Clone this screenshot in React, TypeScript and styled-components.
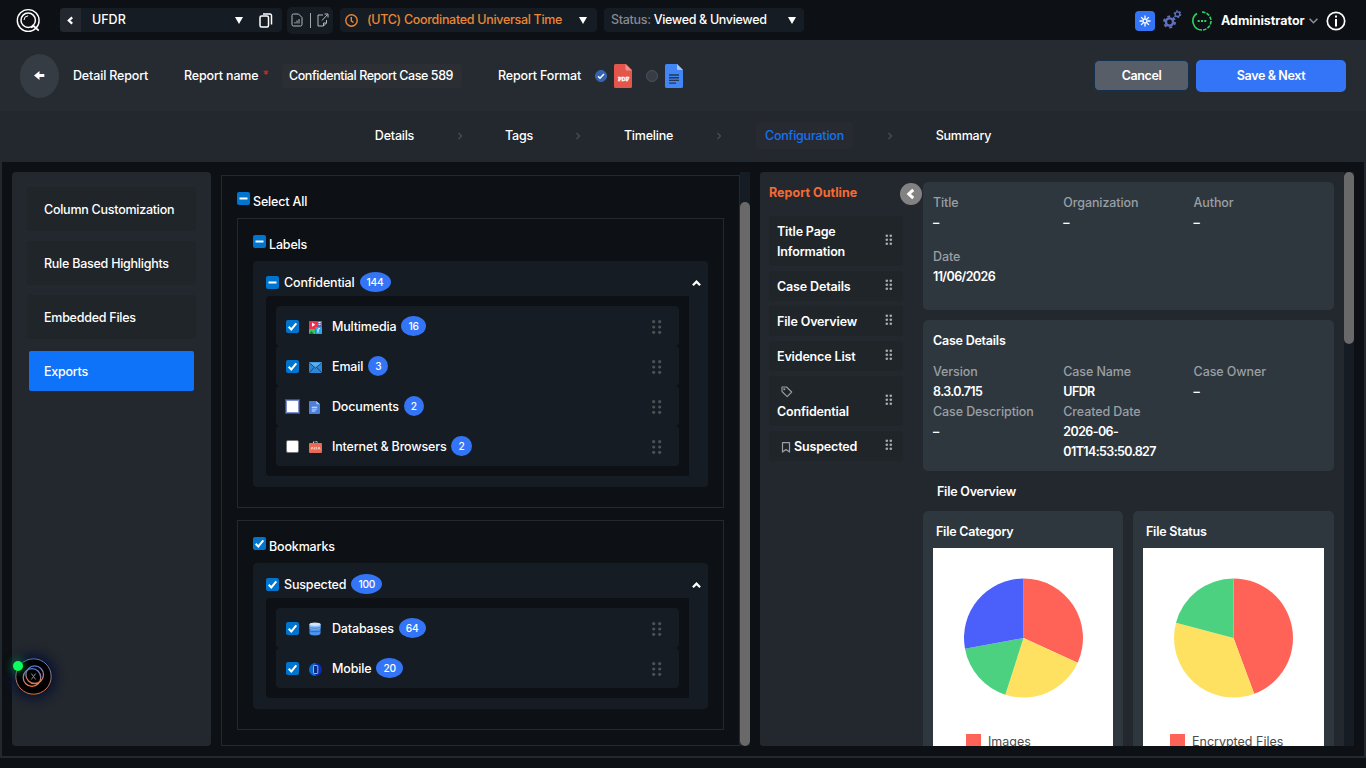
import React, { useState } from "react";
import styled, { createGlobalStyle, ThemeProvider } from "styled-components";

const theme = {
  colors: {
    base: "#0d1014",
    card: "#161c23",
    panel: "#23272e",
    item: "#20252a",
    bar: "#262b32",
    block: "#2f373e",
    primary: "#3375f6",
    check: "#0075d0",
    line: "#25292d",
    muted: "#9a9fa4",
    thumb: "#696969",
  },
};

const GlobalStyle = createGlobalStyle`
  * {
    box-sizing: border-box;
  }

  body {
    margin: 0;
    width: 1366px;
    height: 768px;
    overflow: hidden;
    background: ${theme.colors.base};
    color: #fff;
    font-family: Inter, "Open Sans", sans-serif;
    font-size: 12.5px;
    font-weight: 500;
    line-height: 20px;
    letter-spacing: -0.16px;
    white-space: nowrap;
  }

  svg {
    display: block;
    flex: none;
  }
`;

const Page = styled.div`
  height: 768px;
  display: flex;
  flex-direction: column;
  position: relative;
`;

/* ---------- top bar ---------- */

const TopBar = styled.header`
  height: 40px;
  flex: none;
  display: flex;
  align-items: center;
  padding: 0 20px 0 16px;
`;

const Picker = styled.div<{ $width: number; $left: number }>`
  width: ${({ $width }) => $width}px;
  height: 24px;
  margin-left: ${({ $left }) => $left}px;
  display: flex;
  align-items: center;
  background: ${({ theme }) => theme.colors.card};
  border-radius: 4px;
  overflow: hidden;

  > svg:last-child {
    margin-right: 9px;
  }
`;

const PickerBack = styled.button`
  width: 21px;
  height: 24px;
  padding: 0;
  border: 0;
  background: #22282e;
  display: grid;
  place-items: center;
`;

const PickerText = styled.span<{ $tone?: string; $left: number; $spacing?: number }>`
  margin-left: ${({ $left }) => $left}px;
  color: ${({ $tone }) => $tone || "#fff"};
  letter-spacing: ${({ $spacing }) => $spacing || 0}px;
`;

const Caret = styled.i<{ $right: number }>`
  margin-left: auto;
  margin-right: ${({ $right }) => $right}px;
  border: 4.5px solid transparent;
  border-top: 7px solid #fff;
  border-bottom: 0;
`;

const IconGroup = styled.div`
  width: 46px;
  height: 27px;
  margin-left: 5px;
  padding: 0 4px;
  display: flex;
  align-items: center;
  justify-content: space-between;
  background: ${({ theme }) => theme.colors.card};
  border-radius: 5px;

  i {
    width: 1px;
    height: 15px;
    background: #a3a7ab;
  }
`;

const TopRight = styled.div`
  margin-left: auto;
  display: flex;
  align-items: center;
`;

const BlueSquare = styled.div`
  width: 20px;
  height: 20px;
  margin: 2px 8px 0 0;
  border-radius: 4px;
  background: ${({ theme }) => theme.colors.primary};
  display: grid;
  place-items: center;
`;

const StatusSlot = styled.span`
  margin: 2px 0 0 10px;
`;

const UserName = styled.span`
  width: 88px;
  margin-left: 9px;
  padding-top: 1px;
  font-weight: 700;
  letter-spacing: -0.02px;
`;

const InfoSlot = styled.span`
  margin: 2px 0 0 8px;
`;

/* ---------- report bar ---------- */

const ReportBar = styled.section`
  height: 71px;
  flex: none;
  display: flex;
  align-items: center;
  padding: 0 20px;
  background: ${({ theme }) => theme.colors.bar};
`;

const BackButton = styled.button`
  width: 39px;
  height: 44px;
  padding: 0;
  border: 0;
  border-radius: 50%;
  background: #363c43;
  display: grid;
  place-items: center;
`;

const BarLabel = styled.span<{ $width: number; $left: number }>`
  width: ${({ $width }) => $width}px;
  margin-left: ${({ $left }) => $left}px;
  padding-top: 1px;

  sup {
    color: #d9222a;
    font-size: 12px;
    line-height: 0;
    margin-left: 4px;
    vertical-align: 1px;
  }
`;

const NameField = styled.div`
  width: 180px;
  height: 24px;
  padding-left: 7px;
  line-height: 23px;
  border-radius: 3px;
  background: #2b2f34;
  letter-spacing: -0.43px;
`;

const Radio = styled.span<{ $on?: boolean }>`
  width: 12px;
  height: 12px;
  border-radius: 50%;
  border: 1px solid ${({ $on }) => ($on ? "#3a69b5" : "#4a525c")};
  background: ${({ $on }) => ($on ? "#3262b0" : "#363d45")};
  display: grid;
  place-items: center;
`;

const Formats = styled.div`
  display: flex;
  align-items: center;
  gap: 7px;

  ${Radio}:nth-of-type(2) {
    margin-left: 7px;
  }
`;

const Actions = styled.div`
  margin-left: auto;
  display: flex;
  align-items: center;
  gap: 7px;
`;

const Button = styled.button<{ $main?: boolean }>`
  width: ${({ $main }) => ($main ? 150 : 95)}px;
  height: ${({ $main }) => ($main ? 32 : 31)}px;
  padding: 1px 0 0;
  border: ${({ $main }) => ($main ? "0" : "1px solid #14304f")};
  border-radius: 5px;
  background: ${({ $main, theme }) => ($main ? theme.colors.primary : "#575e68")};
  color: #fff;
  font: inherit;
  font-weight: 600;
  letter-spacing: -0.38px;
`;

/* ---------- steps ---------- */

const Steps = styled.nav`
  height: 51px;
  flex: none;
  padding-left: 366px;
  display: flex;
  align-items: center;
  background: ${({ theme }) => theme.colors.panel};
`;

const Step = styled.span<{ $width: number; $active?: boolean }>`
  width: ${({ $width }) => $width}px;
  height: 27px;
  margin-top: -3px;
  line-height: 27px;
  border-radius: 4px;
  text-align: center;
  letter-spacing: -0.22px;
  color: ${({ $active }) => ($active ? "#1473f0" : "#fff")};
  background: ${({ $active }) => ($active ? "#272b31" : "transparent")};
`;

const StepArrow = styled.span`
  width: 74px;
  margin-top: -2px;
  display: grid;
  place-items: center;
`;

/* ---------- body ---------- */

const Body = styled.main`
  height: 596px;
  flex: none;
  display: flex;
  padding: 10px;
  border: 2px solid ${({ theme }) => theme.colors.panel};
  border-top: 0;
`;

const SideNav = styled.aside`
  width: 199px;
  flex: none;
  padding: 15px;
  display: flex;
  flex-direction: column;
  gap: 10px;
  border-radius: 4px;
  background: ${({ theme }) => theme.colors.panel};
`;

const SideItem = styled.div<{ $active?: boolean }>`
  height: 44px;
  padding-left: 15px;
  line-height: 41px;
  letter-spacing: -0.25px;
  border: 2px solid ${({ $active, theme }) => ($active ? theme.colors.panel : theme.colors.item)};
  border-radius: 4px;
  background: ${({ $active, theme }) => ($active ? "#0f73fa" : theme.colors.item)};
`;

const ExportPane = styled.section`
  width: 529px;
  margin-left: 10px;
  flex: none;
  display: flex;
`;

const ExportFrame = styled.div`
  flex: 1;
  margin-top: 3px;
  padding: 15px 15px 0;
  border: 1px solid ${({ theme }) => theme.colors.line};
`;

const Track = styled.div<{ $top?: number; $height: number }>`
  width: 10px;
  flex: none;
  padding-top: ${({ $top }) => $top || 0}px;
  background: ${({ theme }) => theme.colors.card};

  &::before {
    content: "";
    display: block;
    height: ${({ $height }) => $height}px;
    border-radius: 5px;
    background: ${({ theme }) => theme.colors.thumb};
  }
`;

const CheckLine = styled.label<{ $gap?: number }>`
  display: flex;
  gap: 3px;
  height: 20px;
  padding-top: 1px;
  margin-bottom: ${({ $gap }) => $gap || 0}px;
  line-height: 19px;
`;

const Box = styled.span<{ $state: string; $focus?: boolean }>`
  width: 13px;
  height: 13px;
  flex: none;
  border-radius: ${({ $focus }) => ($focus ? 0 : 2)}px;
  display: grid;
  place-items: center;
  border: ${({ $state, $focus }) =>
    $state === "off" ? `1px solid ${$focus ? "#7d8fce" : "#767676"}` : "0"};
  background: ${({ $state, theme }) => ($state === "off" ? "#fff" : theme.colors.check)};
  outline: ${({ $focus }) => ($focus ? "1px solid #2a4cae" : "none")};
`;

const Group = styled.div<{ $height: number }>`
  height: ${({ $height }) => $height}px;
  margin-bottom: 12px;
  padding: 15px 15px 0;
  border: 1px solid ${({ theme }) => theme.colors.line};
`;

const Card = styled.div`
  margin-top: 7px;
  padding: 11px 19px 11px 13px;
  border-radius: 4px;
  background: ${({ theme }) => theme.colors.card};
`;

const Name = styled.span`
  padding-top: 1px;
`;

const CardHead = styled.div`
  height: 20px;
  margin: 0 -12px 4px 0;
  display: flex;
  align-items: center;

  > ${Box} {
    margin: 1px 5px 0 0;
  }

  > svg {
    margin: 3px 0 0 auto;
  }
`;

const Badge = styled.b`
  height: 20px;
  margin-left: 5px;
  padding: 0 7px;
  min-width: 20px;
  border-radius: 50%;
  background: ${({ theme }) => theme.colors.primary};
  font-size: 10.2px;
  font-weight: 500;
  line-height: 20px;
  text-align: center;
`;

const Rows = styled.div`
  padding: 10px;
  border-radius: 4px 0 0 4px;
  background: ${({ theme }) => theme.colors.base};
`;

const Handle = styled.span<{ $small?: boolean }>`
  margin-left: auto;
  margin-top: ${({ $small }) => ($small ? -4 : 1)}px;
  color: ${({ $small }) => ($small ? "#a9acaf" : "#4c5155")};
`;

const Row = styled.div`
  height: 40px;
  padding: 0 17px 0 10px;
  display: flex;
  align-items: center;
  border-radius: 4px;
  background: ${({ theme }) => theme.colors.card};

  > ${Box} {
    margin-top: 1px;
  }
`;

const RowIcon = styled.span`
  width: 14px;
  margin: 2px 9px 0 10px;
`;

/* ---------- preview ---------- */

const Preview = styled.section`
  width: 584px;
  margin-left: 10px;
  flex: none;
  display: flex;
  position: relative;
  border-radius: 3px 0 0 3px;
  background: ${({ theme }) => theme.colors.panel};
  overflow: hidden;
`;

const Outline = styled.div`
  width: 134px;
  margin: 10px 20px 0 9px;
  flex: none;
  display: flex;
  flex-direction: column;
  gap: 5px;

  h3 {
    height: 20px;
    margin: 0 0 9px;
    color: #f56a35;
    font-size: 12.5px;
    font-weight: 700;
    letter-spacing: 0.02px;
    padding-top: 1px;
    line-height: 19px;
  }
`;

const OutlineItem = styled.div`
  padding: 6px 10px 4px 8px;
  display: flex;
  align-items: center;
  border-radius: 3px;
  background: ${({ theme }) => theme.colors.item};
  font-weight: 600;
  letter-spacing: -0.15px;
  white-space: normal;

  > span:first-child {
    width: 90px;
  }

  span > svg {
    display: inline-block;
    vertical-align: -2px;
    margin: 0 0 0 4px;
  }

  ${Handle} svg {
    display: block;
    margin: 0;
  }
`;

const Collapse = styled.button`
  position: absolute;
  left: 140px;
  top: 11px;
  width: 22px;
  height: 22px;
  padding: 0 1px 0 0;
  border: 0;
  border-radius: 50%;
  background: #828282;
  display: grid;
  place-items: center;
`;

const Sheets = styled.div`
  width: 411px;
  padding-top: 10px;
`;

const Block = styled.div<{ $height: number }>`
  height: ${({ $height }) => $height}px;
  margin-bottom: 10px;
  padding: 11px 10px 9px;
  border-radius: 5px;
  background: ${({ theme }) => theme.colors.block};
`;

const Heading = styled.h4<{ $pad?: number; $down?: boolean }>`
  height: 20px;
  margin: 0;
  padding-top: ${({ $down }) => ($down ? 1 : 0)}px;
  padding-left: ${({ $pad }) => $pad || 0}px;
  font-size: 12.5px;
  font-weight: 600;
  letter-spacing: -0.23px;
`;

const Fields = styled.dl<{ $gap: number; $top?: number }>`
  margin: ${({ $top }) => $top || 0}px 0 0;
  display: grid;
  grid-template-columns: 130.3px 130.3px 130px;
  row-gap: ${({ $gap }) => $gap}px;

  dt {
    color: ${({ theme }) => theme.colors.muted};
    letter-spacing: -0.1px;
  }

  dd {
    margin: 0;
    font-weight: 600;
    letter-spacing: -0.6px;
    white-space: normal;
  }
`;

const Charts = styled.div`
  margin-top: 10px;
  display: grid;
  grid-template-columns: 200px 201px;
  gap: 10px;
`;

const ChartCard = styled.div`
  height: 260px;
  padding: 10px;
  border-radius: 5px;
  background: ${({ theme }) => theme.colors.block};
`;

const ChartPaper = styled.div`
  height: 240px;
  margin-top: 7px;
  padding-top: 30px;
  background: #fff;

  > svg {
    margin-left: 30px;
  }
`;

const Legend = styled.div<{ $left: number }>`
  margin: 34px 0 0 ${({ $left }) => $left}px;
  display: flex;
  align-items: center;
  gap: 7px;
  color: #4a4a4a;
  font-weight: 400;
  letter-spacing: 0;

  i {
    width: 15px;
    height: 15px;
    margin-top: -2px;
    background: #ff6358;
  }
`;

const Assistant = styled.div`
  position: absolute;
  left: 15px;
  top: 658px;
  width: 37px;
  height: 37px;
  border-radius: 50%;
  background: #000;
  box-shadow: 0 0 10px 5px #0c1630;

  &::after {
    content: "";
    position: absolute;
    left: -2px;
    top: 3px;
    width: 10px;
    height: 10px;
    border-radius: 50%;
    background: #0cff5c;
    box-shadow: 0 0 9px 1px #0a7a32;
  }
`;

/* ---------- drawings ---------- */

const Logo = () => (
  <svg width="25" height="25" viewBox="0 0 25 25" fill="none" stroke="#fff">
    <circle cx="12.2" cy="12.5" r="10.9" strokeWidth="1.4" />
    <circle cx="12.2" cy="12.2" r="7.2" strokeWidth="1.5" />
    <path d="M8 12a4.4 4.4 0 0 1 4.2-4.2" strokeWidth="1" />
    <path d="M16.5 17l6.3 5.7M15 19.5l3-1.5" strokeWidth="1.7" />
  </svg>
);

const Chevron = ({ dir = "left", size = 8, color = "#fff", width = 2 }) => {
  const paths: Record<string, string> = {
    left: "M5.5 1.2L2.5 4l3 2.8",
    right: "M2.5 1l3 3-3 3",
    up: "M.8 5.6L4 2.4l3.2 3.2",
    down: "M.5 2.5L4 6l3.5-3.5",
  };
  return (
    <svg width={size} height={size} viewBox="0 0 8 8" fill="none" stroke={color} strokeWidth={width}>
      <path d={paths[dir]} />
    </svg>
  );
};

const CopyIcon = () => (
  <svg width="14" height="15" viewBox="0 0 14 15" fill="none" stroke="#fff" strokeWidth="1.5">
    <rect x="1" y="3" width="8.5" height="11" rx="1.5" />
    <path d="M4 1h7a1.5 1.5 0 0 1 1.5 1.5v9" />
  </svg>
);

const ReportIcon = () => (
  <svg width="12" height="14" viewBox="0 0 12 14" fill="none" stroke="#b5b8bb">
    <path d="M1 2.5A1.5 1.5 0 0 1 2.5 1H7.5L11 4.5v7A1.5 1.5 0 0 1 9.5 13h-7A1.5 1.5 0 0 1 1 11.5z" />
    <path d="M4 10.5v-1.5M6 10.5v-3M8 10.5v-4.5" />
  </svg>
);

const ShareIcon = () => (
  <svg width="12" height="14" viewBox="0 0 12 14" fill="none" stroke="#b5b8bb">
    <path d="M6 2H1v11h5.500L9.500 10V7M6.500 13v-3h3" />
    <path d="M5 7.500L10.500 1.500M7.500 1H11v3.500" />
  </svg>
);

const ClockIcon = () => (
  <svg width="13" height="13" viewBox="0 0 13 13" fill="none" stroke="#ec8733" strokeWidth="1.4">
    <circle cx="6.5" cy="6.5" r="5.7" />
    <path d="M6.3 3v3.8l2.2 1.7" />
  </svg>
);

const SparkIcon = () => (
  <svg width="12" height="12" viewBox="0 0 12 12" stroke="#fff" strokeWidth="1.3" fill="none">
    <path d="M6 .5v3M6 8.500v3M.5 6h3M8.500 6h3M2.100 2.100l2 2M7.900 7.900l2 2M2.100 9.900l2-2M7.900 4.100l2-2" />
    <circle cx="6" cy="6" r="2" />
  </svg>
);

const GearsIcon = () => (
  <svg width="19" height="20" viewBox="0 0 19 20" fill="none" stroke="#6170bd">
    <circle cx="6.5" cy="12" r="3.6" strokeWidth="2.4" />
    <circle cx="6.5" cy="12" r="5.5" strokeWidth="2" strokeDasharray="2.9 2.86" />
    <circle cx="14.5" cy="4.2" r="2.3" strokeWidth="1.3" />
    <circle cx="14.5" cy="4.2" r="3.3" strokeWidth="1.2" strokeDasharray="1.7 1.75" />
  </svg>
);

const StatusIcon = () => (
  <svg width="20" height="20" viewBox="0 0 20 20" fill="none" stroke="#2fd45f">
    <path d="M10 1a9 9 0 0 1 0 18" strokeWidth="1.6" strokeDasharray="3.5 1.2" />
    <path d="M10 19A9 9 0 0 1 5 2.5" strokeWidth="1.6" />
    <path d="M5.700 10h2M9 10h2M12.300 10h2" strokeWidth="2" />
  </svg>
);

const InfoIcon = () => (
  <svg width="20" height="20" viewBox="0 0 20 20" fill="none" stroke="#fff">
    <circle cx="10" cy="10" r="8.7" strokeWidth="1.7" />
    <path d="M10 8v7.500M10 4.500v2" strokeWidth="2" />
  </svg>
);

const ArrowLeft = () => (
  <svg width="11" height="9" viewBox="0 0 11 9" fill="#fff">
    <path d="M0 4.500L5.500 0v3h4.800v3H5.500v3z" />
  </svg>
);

const PdfIcon = () => (
  <svg width="18" height="24" viewBox="0 0 18 24">
    <path d="M1.500 0H12l6 6v16.500a1.500 1.500 0 0 1-1.500 1.500h-15A1.500 1.500 0 0 1 0 22.500v-21A1.500 1.500 0 0 1 1.500 0z" fill="#e2564b" />
    <path d="M11.500 0L18 6.500h-5a1.500 1.500 0 0 1-1.500-1.500z" fill="#ef8f86" />
    <text
      x="9.6"
      y="17.2"
      textAnchor="middle"
      fontSize="5.8"
      fontWeight="900"
      letterSpacing="0"
      fill="#fff"
      stroke="#fff"
      strokeWidth=".3"
      fontFamily="Liberation Serif, serif"
    >
      PDF
    </text>
  </svg>
);

const DocIcon = ({ small = false }) => (
  <svg width={small ? 11 : 18} height={small ? 13 : 24} viewBox="0 0 18 24" preserveAspectRatio="none">
    <path
      d="M1.500 0H12l6 6v16.500a1.500 1.500 0 0 1-1.500 1.500h-15A1.500 1.500 0 0 1 0 22.500v-21A1.500 1.500 0 0 1 1.500 0z"
      fill={small ? "#4b7fdc" : "#4285f4"}
    />
    <path d="M12 0l6 6h-5a1 1 0 0 1-1-1z" fill="#a5c5f8" />
    <path
      d={small ? "M4.500 11.500h9M4.500 15h9M4.500 18.500h6" : "M4 11h10M4 13.700h10M4 16.400h10M4 19.100h7"}
      stroke={small ? "#e4ecfb" : "#26384f"}
      strokeWidth={small ? 1.8 : 1.4}
    />
  </svg>
);

const MediaIcon = () => (
  <svg width="13" height="13" viewBox="0 0 13 13">
    <rect width="8" height="8" fill="#f0304c" />
    <path d="M3 1.500v4.300L6.300 3.700z" fill="#fff" />
    <rect x="8" width="5" height="6" fill="#5c69b8" />
    <path d="M9.500 1.500h2M9.500 3.300h2" stroke="#fff" />
    <rect y="8" width="6.5" height="5" fill="#36c759" />
    <path d="M0 13l2.500-3L5 13z" fill="#137a3b" />
    <rect x="6.5" y="6" width="6.5" height="7" fill="#2aa6f2" />
    <path d="M9 11.500V8l2-.5" stroke="#fff" fill="none" />
  </svg>
);

const MailIcon = () => (
  <svg width="13" height="11" viewBox="0 0 13 11">
    <rect width="13" height="11" rx="1" fill="#2f86d3" />
    <path d="M0 .5h13L6.500 6z" fill="#58b0ee" />
    <path d="M.5 1l6 5 6-5M.5 10.500l4.500-5M12.500 10.500L8 5.500" stroke="#143f6b" fill="none" strokeWidth=".9" />
  </svg>
);

const WebIcon = () => (
  <svg width="13" height="12" viewBox="0 0 13 12">
    <path d="M4.500 2V.8h4V2" stroke="#d6dbe0" fill="none" strokeDasharray="2 1" />
    <rect y="2" width="13" height="10" rx="1" fill="#ea6a58" />
    <path d="M2 8.500l1.200-2.500 1.200 2.500M5.700 6v2.500M7.300 6v2.500M9 8.500L10 6l1.200 2.500" stroke="#fbd9d4" fill="none" strokeWidth=".9" />
  </svg>
);

const DatabaseIcon = () => (
  <svg width="12" height="14" viewBox="0 0 12 14">
    <path d="M.5 2v9.500c0 1.200 2.500 2 5.500 2s5.500-.8 5.500-2V2z" fill="#4a93ef" />
    <path d="M.5 2v4c0 1 2.500 1.600 5.500 1.600S11.500 7 11.500 6V2z" fill="#8cbdf6" />
    <ellipse cx="6" cy="2.2" rx="5.5" ry="1.7" fill="#cfe3fc" />
    <path d="M.5 5.200c1 1.300 10 1.300 11 0M.5 8.700c1 1.300 10 1.300 11 0" stroke="#2566b8" fill="none" strokeWidth=".8" />
  </svg>
);

const MobileIcon = () => (
  <svg width="13" height="13" viewBox="0 0 13 13">
    <circle cx="6.5" cy="6.5" r="6.5" fill="#0c2bb0" />
    <path d="M6.500 0a6.500 6.500 0 0 0 0 13z" fill="#0868cf" />
    <rect x="4.5" y="2.5" width="4.3" height="8" rx=".7" fill="#0b2a7c" stroke="#9cc4fa" strokeWidth=".9" />
  </svg>
);

const Dots = ({ small = false }) => (
  <svg width={small ? 8 : 10} height={small ? 12 : 14} fill="currentColor">
    {[0, 1, 2].map((row) =>
      [0, 1].map((col) => (
        <circle
          key={`${row}-${col}`}
          cx={small ? 1.8 + col * 4 : 1.7 + col * 6}
          cy={small ? 1.8 + row * 4 : 1.7 + row * 5.3}
          r={small ? 1.3 : 1.6}
        />
      ))
    )}
  </svg>
);

const TagIcon = () => (
  <svg width="12" height="12" viewBox="0 0 12 12" fill="none" stroke="#999ea6" strokeWidth="1.1">
    <path d="M1 1h4.500L10.700 6 6.200 10.700 1 5.500z" strokeLinejoin="round" />
    <circle cx="3.3" cy="3.3" r=".5" />
  </svg>
);

const BookmarkIcon = () => (
  <svg width="10" height="11" viewBox="0 0 10 11" fill="none" stroke="#999ea6" strokeWidth="1.2">
    <path d="M1.500.7h7v9.400L5 7.500l-3.500 2.600z" strokeLinejoin="round" />
  </svg>
);

const AssistantIcon = () => (
  <svg width="37" height="37" viewBox="0 0 37 37" fill="none">
    <defs>
      <linearGradient id="ring" x1="0" y1="0" x2="0" y2="1">
        <stop offset="0" stopColor="#5e7fe0" />
        <stop offset=".55" stopColor="#a8808c" />
        <stop offset="1" stopColor="#f07840" />
      </linearGradient>
    </defs>
    <circle cx="18.5" cy="18.5" r="17.7" stroke="url(#ring)" />
    <circle cx="17" cy="19.5" r="8.8" stroke="url(#ring)" strokeWidth="1.3" />
    <circle cx="19.7" cy="16.7" r="8.8" stroke="url(#ring)" strokeWidth="1.3" />
    <path d="M16.300 15.500l4.400 6M20.700 15.500l-4.400 6" stroke="#8f96a6" strokeWidth=".9" />
  </svg>
);

/* ---------- widgets ---------- */

type CheckState = "on" | "off" | "mixed";

const Checkbox: React.FC<{ state: CheckState; focus?: boolean }> = ({ state, focus }) => (
  <Box $state={state} $focus={focus}>
    {state !== "off" && (
      <svg width="13" height="13" viewBox="0 0 13 13" fill="none" stroke="#fff" strokeWidth="2">
        <path d={state === "on" ? "M2.700 6.800l2.600 2.600 5-6" : "M2.500 6.500h8"} />
      </svg>
    )}
  </Box>
);

interface Slice {
  to: number;
  color: string;
}

const Pie: React.FC<{ slices: Slice[] }> = ({ slices }) => {
  const point = (deg: number) => {
    const a = (deg * Math.PI) / 180;
    return `${60.5 + 59.5 * Math.sin(a)} ${60 - 59.5 * Math.cos(a)}`;
  };
  return (
    <svg width="121" height="120" viewBox="0 0 121 120">
      {slices.map((slice, i) => {
        const from = i ? slices[i - 1].to : 0;
        return (
          <path
            key={slice.color}
            fill={slice.color}
            d={`M60.5 60L${point(from)}A59.5 59.5 0 ${slice.to - from > 180 ? 1 : 0} 1 ${point(slice.to)}Z`}
          />
        );
      })}
    </svg>
  );
};

interface ExportRow {
  name: string;
  count: number;
  state: CheckState;
  focus?: boolean;
  icon: React.ReactNode;
}

interface ExportGroupProps {
  title: string;
  state: CheckState;
  height: number;
  name: string;
  count: number;
  rows: ExportRow[];
}

const ExportGroup: React.FC<ExportGroupProps> = ({ title, state, height, name, count, rows }) => (
  <Group $height={height}>
    <CheckLine>
      <Checkbox state={state} />
      <span>{title}</span>
    </CheckLine>
    <Card>
      <CardHead>
        <Checkbox state={state} />
        <Name>{name}</Name>
        <Badge>{count}</Badge>
        <Chevron dir="up" size={9} />
      </CardHead>
      <Rows>
        {rows.map((row) => (
          <Row key={row.name}>
            <Checkbox state={row.state} focus={row.focus} />
            <RowIcon>{row.icon}</RowIcon>
            <Name>{row.name}</Name>
            <Badge>{row.count}</Badge>
            <Handle>
              <Dots />
            </Handle>
          </Row>
        ))}
      </Rows>
    </Card>
  </Group>
);

const steps = [
  { name: "Details", width: 57 },
  { name: "Tags", width: 44 },
  { name: "Timeline", width: 67 },
  { name: "Configuration", width: 97 },
  { name: "Summary", width: 73 },
];

const labelRows: ExportRow[] = [
  { name: "Multimedia", count: 16, state: "on", icon: <MediaIcon /> },
  { name: "Email", count: 3, state: "on", icon: <MailIcon /> },
  { name: "Documents", count: 2, state: "off", focus: true, icon: <DocIcon small /> },
  { name: "Internet & Browsers", count: 2, state: "off", icon: <WebIcon /> },
];

const bookmarkRows: ExportRow[] = [
  { name: "Databases", count: 64, state: "on", icon: <DatabaseIcon /> },
  { name: "Mobile", count: 20, state: "on", icon: <MobileIcon /> },
];

const outline = [
  { name: "Title Page Information" },
  { name: "Case Details" },
  { name: "File Overview" },
  { name: "Evidence List" },
  { name: "Confidential", icon: <TagIcon /> },
  { name: "Suspected", icon: <BookmarkIcon /> },
];

const Field = ({ label, value }: { label: string; value: string }) => (
  <div>
    <dt>{label}</dt>
    <dd>{value}</dd>
  </div>
);

const App: React.FC = () => {
  const [section, setSection] = useState("Exports");

  return (
    <ThemeProvider theme={theme}>
      <GlobalStyle />
      <Page>
        <TopBar>
          <Logo />
          <Picker $width={222} $left={19}>
            <PickerBack>
              <Chevron size={9} />
            </PickerBack>
            <PickerText $left={11}>UFDR</PickerText>
            <Caret $right={16} />
            <CopyIcon />
          </Picker>
          <IconGroup>
            <ReportIcon />
            <i />
            <ShareIcon />
          </IconGroup>
          <Picker $width={257} $left={7}>
            <PickerText $left={5}>
              <ClockIcon />
            </PickerText>
            <PickerText $left={9} $tone="#ec8733" $spacing={-0.3}>
              (UTC) Coordinated Universal Time
            </PickerText>
            <Caret $right={10} />
          </Picker>
          <Picker $width={200} $left={7}>
            <PickerText $left={7} $tone="#868b90" $spacing={-0.3}>
              Status:
            </PickerText>
            <PickerText $left={3} $spacing={-0.33}>
              Viewed &amp; Unviewed
            </PickerText>
            <Caret $right={8} />
          </Picker>
          <TopRight>
            <BlueSquare>
              <SparkIcon />
            </BlueSquare>
            <GearsIcon />
            <StatusSlot>
              <StatusIcon />
            </StatusSlot>
            <UserName>Administrator</UserName>
            <Chevron dir="down" color="#8d9196" width={1.4} size={9} />
            <InfoSlot>
              <InfoIcon />
            </InfoSlot>
          </TopRight>
        </TopBar>

        <ReportBar>
          <BackButton>
            <ArrowLeft />
          </BackButton>
          <BarLabel $left={14} $width={111}>
            Detail Report
          </BarLabel>
          <BarLabel $left={0} $width={98}>
            Report name<sup>*</sup>
          </BarLabel>
          <NameField>Confidential Report Case 589</NameField>
          <BarLabel $left={36} $width={97}>
            Report Format
          </BarLabel>
          <Formats>
            <Radio $on>
              <svg width="8" height="8" viewBox="0 0 8 8" fill="none" stroke="#fff" strokeWidth="1.5">
                <path d="M1 4.200l2 2 4-4.200" />
              </svg>
            </Radio>
            <PdfIcon />
            <Radio />
            <DocIcon />
          </Formats>
          <Actions>
            <Button>Cancel</Button>
            <Button $main>Save &amp; Next</Button>
          </Actions>
        </ReportBar>

        <Steps>
          {steps.map((step, i) => (
            <React.Fragment key={step.name}>
              {i > 0 && (
                <StepArrow>
                  <Chevron dir="right" color="#4a4f55" width={1.2} />
                </StepArrow>
              )}
              <Step $width={step.width} $active={step.name === "Configuration"}>
                {step.name}
              </Step>
            </React.Fragment>
          ))}
        </Steps>

        <Body>
          <SideNav>
            {["Column Customization", "Rule Based Highlights", "Embedded Files", "Exports"].map((name) => (
              <SideItem key={name} $active={name === section} onClick={() => setSection(name)}>
                {name}
              </SideItem>
            ))}
          </SideNav>

          <ExportPane>
            <ExportFrame>
              <CheckLine $gap={7}>
                <Checkbox state="mixed" />
                <span>Select All</span>
              </CheckLine>
              <ExportGroup title="Labels" state="mixed" height={290} name="Confidential" count={144} rows={labelRows} />
              <ExportGroup title="Bookmarks" state="on" height={210} name="Suspected" count={100} rows={bookmarkRows} />
            </ExportFrame>
            <Track $top={30} $height={544} />
          </ExportPane>

          <Preview>
            <Outline>
              <h3>Report Outline</h3>
              {outline.map((item) => (
                <OutlineItem key={item.name}>
                  <span>
                    {item.icon} {item.name}
                  </span>
                  <Handle $small>
                    <Dots small />
                  </Handle>
                </OutlineItem>
              ))}
            </Outline>
            <Collapse>
              <Chevron size={12} />
            </Collapse>
            <Sheets>
              <Block $height={128}>
                <Fields $gap={14}>
                  <Field label="Title" value="–" />
                  <Field label="Organization" value="–" />
                  <Field label="Author" value="–" />
                  <Field label="Date" value="11/06/2026" />
                </Fields>
              </Block>
              <Block $height={151}>
                <Heading>Case Details</Heading>
                <Fields $gap={0} $top={11}>
                  <Field label="Version" value="8.3.0.715" />
                  <Field label="Case Name" value="UFDR" />
                  <Field label="Case Owner" value="–" />
                  <Field label="Case Description" value="–" />
                  <Field label="Created Date" value="2026-06-01T14:53:50.827" />
                </Fields>
              </Block>
              <Heading $pad={14} $down>
                File Overview
              </Heading>
              <Charts>
                <ChartCard>
                  <Heading $pad={3} $down>
                    File Category
                  </Heading>
                  <ChartPaper>
                    <Pie
                      slices={[
                        { to: 114.5, color: "#ff6358" },
                        { to: 197.8, color: "#ffe162" },
                        { to: 259.5, color: "#4cd180" },
                        { to: 360, color: "#4b5ffa" },
                      ]}
                    />
                    <Legend $left={33}>
                      <i />
                      Images
                    </Legend>
                  </ChartPaper>
                </ChartCard>
                <ChartCard>
                  <Heading $pad={3} $down>
                    File Status
                  </Heading>
                  <ChartPaper>
                    <Pie
                      slices={[
                        { to: 159.7, color: "#ff6358" },
                        { to: 284.8, color: "#ffe162" },
                        { to: 360, color: "#4cd180" },
                      ]}
                    />
                    <Legend $left={27}>
                      <i />
                      Encrypted Files
                    </Legend>
                  </ChartPaper>
                </ChartCard>
              </Charts>
            </Sheets>
          </Preview>
          <Track $height={172} />
        </Body>

        <Assistant>
          <AssistantIcon />
        </Assistant>
      </Page>
    </ThemeProvider>
  );
};

export default App;
